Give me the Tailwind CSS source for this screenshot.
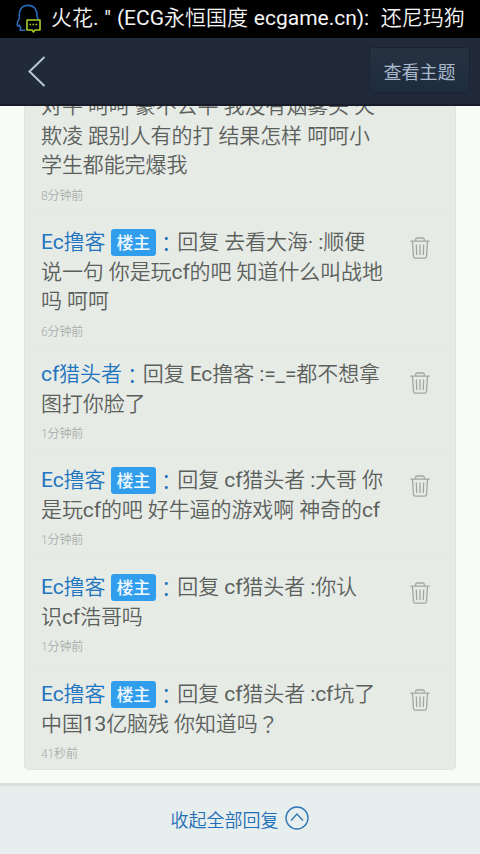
<!DOCTYPE html>
<html lang="zh-CN">
<head>
<meta charset="utf-8">
<title>回复</title>
<script src="https://cdn.jsdelivr.net/npm/@tailwindcss/browser@4"></script>
</head>
<body class="w-[480px] h-[854px] overflow-hidden flex flex-col bg-[#f7fdf6] font-['Roboto','Noto_Sans_CJK_SC_DemiLight','Noto_Sans_CJK_SC',sans-serif]">
<svg class="hidden">
  <symbol id="trash" viewBox="0 0 20 22"><g fill="none" stroke="#a0a7a2" stroke-width="1.3" stroke-linecap="round" stroke-linejoin="round"><path d="M.8 4.2h18.4M5.7 4V2.4Q5.7 1 7.2 1h5.600Q14.300 1 14.300 2.400V4M2.500 4.500 3.500 19.500Q3.600 21.200 5.300 21.200h9.400Q16.400 21.200 16.500 19.500L17.500 4.500M6.300 8l.4 9.500M10 8v9.500M13.700 8l-.4 9.500"/></g></symbol>
</svg>
<header class="h-[38px] shrink-0 bg-black flex items-center pb-[2px] pl-[16px] text-[#f4f4f4]">
  <svg class="w-[26px] h-[30px] shrink-0 mt-[2px]" viewBox="0 0 26 30" fill="none">
    <path d="M9.500 26.300H4.500Q3.600 25.500 5 23.600Q3.700 23.200 3.300 21Q1.500 23.500 1.200 20.500Q1.100 17.500 3.400 14.500C2.400 5.500 6 1.400 12 1.400S21.300 5.500 21 12.500L22.500 15.500" stroke="#2867b5" stroke-width="1.600" stroke-linejoin="round"/>
    <path d="M11 16h13v10h-5l-1.500 2-1.500-2h-5z" stroke="#a9cf2b" stroke-width="1.600" stroke-linejoin="round"/>
    <path d="M13.500 20.500h1.600m1.400 0h1.600m1.400 0h1.600" stroke="#a9cf2b" stroke-width="1.600"/>
  </svg>
  <div class="ml-[9px] text-[21px] leading-[30px] [word-spacing:0.600px] whitespace-pre">火花. " (ECG永恒国度 ecgame.cn):  还尼玛狗</div>
</header>
<nav class="h-[68px] shrink-0 bg-[#202a38] border-b-2 border-[#171c28] flex items-center justify-between pl-[27px] pr-[10px]">
  <svg class="w-[20px] h-[32px]" viewBox="0 0 20 32" fill="none"><path d="M17.500 2 2.500 16.500l15 14.500" stroke="#b9c6d8" stroke-width="2"/></svg>
  <div class="w-[101px] h-[47px] mt-[-1px] rounded-[3px] border border-[#182231] bg-linear-to-b from-[#273240] to-[#1d2c3d] text-[#aab9cd] text-[18px] leading-[47px] text-center shadow-[0_0_1px_#344050] font-['Noto_Sans_CJK_SC']">查看主题</div>
</nav>
<main class="h-[677px] shrink-0 overflow-hidden px-[24px]">
  <section class="h-[664px] bg-[#e6ebe6] border border-t-0 border-[#dfe5df] rounded-b-[5px] text-[21px] leading-[29.500px] tracking-[-0.100px] text-[#5c605c] whitespace-nowrap overflow-hidden">
    <article class="h-[108px] flow-root pl-[16px] border-b border-[#e3e9e4]">
      <div class="mt-[-14px]">对牛 呵呵 豪不公平 我没有烟雾头 火</div>
      <div>欺凌 跟别人有的打 结果怎样 呵呵小</div>
      <div>学生都能完爆我</div>
      <time class="block mt-[5px] text-[12px] leading-[20px] font-light text-[#a8aeaa]">8分钟前</time>
    </article>
    <article class="h-[133px] pl-[16px] pt-[14px] pr-[25px] flex justify-between border-b border-[#e3e9e4]">
      <div>
        <div class="flex items-center h-[29.500px]"><span class="text-[#1f75bf]">Ec撸客</span><b class="ml-[5.500px] w-[45px] h-[27px] rounded-[3px] bg-[#309eed] text-[#f1f9ff] text-[17px] leading-[25px] font-medium text-center font-['Noto_Sans_CJK_SC']">楼主</b><span lang="zh-TW" class="text-[#1f75bf] w-[21.500px] mt-[-1px] font-['Noto_Sans_CJK_TC'] font-[350]">：</span><span>回复 去看大海· :顺便</span></div>
        <div>说一句 你是玩cf的吧 知道什么叫战地</div>
        <div>吗 呵呵</div>
        <time class="block mt-[5px] text-[12px] leading-[20px] font-light text-[#a8aeaa]">6分钟前</time>
      </div>
      <svg class="w-[20px] h-[22px] mt-[9px]"><use href="#trash"/></svg>
    </article>
    <article class="h-[106px] pl-[16px] pt-[13px] pr-[25px] flex justify-between border-b border-[#e3e9e4]">
      <div>
        <div class="flex items-center h-[29.500px]"><span class="text-[#1f75bf]">cf猎头者</span><span lang="zh-TW" class="text-[#1f75bf] w-[21px] mt-[-1px] font-['Noto_Sans_CJK_TC'] font-[350]">：</span><span>回复 Ec撸客 :=_=都不想拿</span></div>
        <div>图打你脸了</div>
        <time class="block mt-[5px] text-[12px] leading-[20px] font-light text-[#a8aeaa]">1分钟前</time>
      </div>
      <svg class="w-[20px] h-[22px] mt-[12px]"><use href="#trash"/></svg>
    </article>
    <article class="h-[107px] pl-[16px] pt-[13px] pr-[25px] flex justify-between border-b border-[#e3e9e4]">
      <div>
        <div class="flex items-center h-[29.500px]"><span class="text-[#1f75bf]">Ec撸客</span><b class="ml-[5.500px] w-[45px] h-[27px] rounded-[3px] bg-[#309eed] text-[#f1f9ff] text-[17px] leading-[25px] font-medium text-center font-['Noto_Sans_CJK_SC']">楼主</b><span lang="zh-TW" class="text-[#1f75bf] w-[21.500px] mt-[-1px] font-['Noto_Sans_CJK_TC'] font-[350]">：</span><span>回复 cf猎头者 :大哥 你</span></div>
        <div>是玩cf的吧 好牛逼的游戏啊 神奇的cf</div>
        <time class="block mt-[5px] text-[12px] leading-[20px] font-light text-[#a8aeaa]">1分钟前</time>
      </div>
      <svg class="w-[20px] h-[22px] mt-[9px]"><use href="#trash"/></svg>
    </article>
    <article class="h-[107px] pl-[16px] pt-[13px] pr-[25px] flex justify-between border-b border-[#e3e9e4]">
      <div>
        <div class="flex items-center h-[29.500px]"><span class="text-[#1f75bf]">Ec撸客</span><b class="ml-[5.500px] w-[45px] h-[27px] rounded-[3px] bg-[#309eed] text-[#f1f9ff] text-[17px] leading-[25px] font-medium text-center font-['Noto_Sans_CJK_SC']">楼主</b><span lang="zh-TW" class="text-[#1f75bf] w-[21.500px] mt-[-1px] font-['Noto_Sans_CJK_TC'] font-[350]">：</span><span>回复 cf猎头者 :你认</span></div>
        <div>识cf浩哥吗</div>
        <time class="block mt-[5px] text-[12px] leading-[20px] font-light text-[#a8aeaa]">1分钟前</time>
      </div>
      <svg class="w-[20px] h-[22px] mt-[9px]"><use href="#trash"/></svg>
    </article>
    <article class="pl-[16px] pt-[13px] pr-[25px] flex justify-between">
      <div>
        <div class="flex items-center h-[29.500px]"><span class="text-[#1f75bf]">Ec撸客</span><b class="ml-[5.500px] w-[45px] h-[27px] rounded-[3px] bg-[#309eed] text-[#f1f9ff] text-[17px] leading-[25px] font-medium text-center font-['Noto_Sans_CJK_SC']">楼主</b><span lang="zh-TW" class="text-[#1f75bf] w-[21.500px] mt-[-1px] font-['Noto_Sans_CJK_TC'] font-[350]">：</span><span>回复 cf猎头者 :cf坑了</span></div>
        <div class="flex h-[29.500px]"><span>中国13亿脑残 你知道吗</span><span lang="zh-TW" class="mt-[-1px] font-['Noto_Sans_CJK_TC'] font-[350]">？</span></div>
        <time class="block mt-[5px] text-[12px] leading-[20px] font-light text-[#a8aeaa]">41秒前</time>
      </div>
      <svg class="w-[20px] h-[22px] mt-[9px]"><use href="#trash"/></svg>
    </article>
  </section>
</main>
<footer class="h-[71px] shrink-0 border-t-[3px] border-[#d7dedc] bg-[#e7eeee] flex items-center justify-center gap-[6px] pr-px text-[18px] text-[#1f6fb8]">
  <span>收起全部回复</span>
  <svg class="w-[24px] h-[24px] mb-[4px]" viewBox="0 0 24 24" fill="none" stroke="#2f78b8" stroke-width="1.400"><circle cx="12" cy="12" r="11"/><path d="m6 14.500 6-6.500 6 6.500"/></svg>
</footer>
</body>
</html>
